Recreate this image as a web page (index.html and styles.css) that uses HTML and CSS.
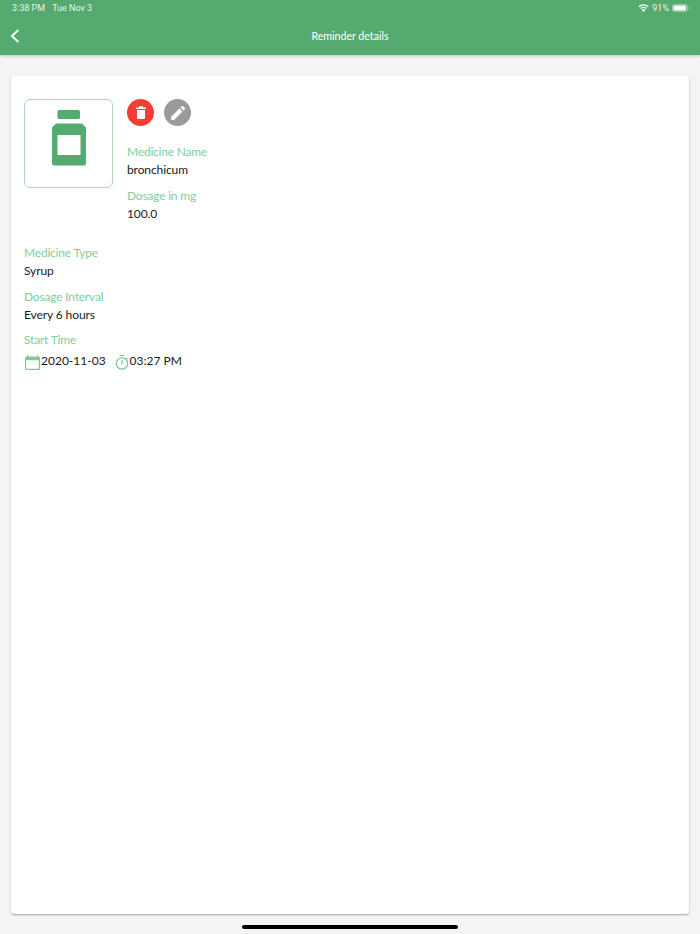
FILE: index.html
```html
<!DOCTYPE html>
<html lang="en">
<head>
<meta charset="utf-8">
<title>Reminder details</title>
<link rel="stylesheet" href="styles.css">
</head>
<body>
<header class="appbar">
  <div class="status">
    <div class="status-left"><span>3:38 PM</span><span>Tue Nov 3</span></div>
    <div class="status-right">
      <svg class="wifi" width="11" height="8" viewBox="0 0 11 8"><path d="M5.5 8 3.7 5.9a2.7 2.7 0 0 1 3.6 0z" fill="#fff"/><path d="M2.6 4.6a4.4 4.4 0 0 1 5.8 0M.8 2.700a7 7 0 0 1 9.400 0" fill="none" stroke="#fff" stroke-width="1.300"/></svg>
      <span>91%</span>
      <svg class="battery" width="18" height="8" viewBox="0 0 18 8"><rect x=".5" y=".5" width="15" height="7" rx="2" fill="none" stroke="#fff" stroke-opacity=".45"/><rect x="1.500" y="1.500" width="12.500" height="5" rx="1" fill="#fff"/><path d="M16.500 2.700c.7.2 1 .7 1 1.300s-.3 1.100-1 1.300z" fill="#fff" fill-opacity=".5"/></svg>
    </div>
  </div>
  <div class="nav">
    <svg class="back" width="10" height="14" viewBox="0 0 10 14"><path d="M8.300 1 2 7l6.300 6" fill="none" stroke="#fff" stroke-width="2"/></svg>
    <h1 class="title">Reminder details</h1>
  </div>
</header>
<main class="card">
  <section class="top">
    <div class="picture">
      <svg width="34" height="56" viewBox="0 0 34 56"><rect x="5.500" y="0" width="22.500" height="9" rx="1.500" fill="#55ab6f"/><path d="M4 13.500h26l4 4V53.500a2 2 0 0 1-2 2H2a2 2 0 0 1-2-2V17.500z" fill="#55ab6f"/><rect x="5.500" y="25" width="23" height="20" fill="#fff"/></svg>
    </div>
    <div class="top-info">
      <div class="actions">
        <button class="round delete" type="button" aria-label="Delete">
          <svg width="10" height="13" viewBox="0 0 10 13"><path d="M0 1.600h10V3H0zM3 .3h4v1.300H3zM1 4h8v8a1 1 0 0 1-1 1H2a1 1 0 0 1-1-1z" fill="#fff"/></svg>
        </button>
        <button class="round edit" type="button" aria-label="Edit">
          <svg width="14" height="14" viewBox="0 0 14 14"><path d="M0 14v-3L8.500 2.500l3 3L3 14zM9.500 1.500 10.800.2a.8.8 0 0 1 1.100 0l1.900 1.900a.8.8 0 0 1 0 1.100l-1.300 1.300z" fill="#fff"/></svg>
        </button>
      </div>
      <div class="field first"><div class="label">Medicine Name</div><div class="value">bronchicum</div></div>
      <div class="field"><div class="label">Dosage in mg</div><div class="value">100.0</div></div>
    </div>
  </section>
  <section class="details">
    <div class="field"><div class="label">Medicine Type</div><div class="value">Syrup</div></div>
    <div class="field"><div class="label">Dosage Interval</div><div class="value">Every 6 hours</div></div>
    <div class="field">
      <div class="label">Start Time</div>
      <div class="value when">
        <svg class="cal" width="15" height="15" viewBox="0 0 15 15"><path d="M3 0v1.500h9V0h1v1.500h.5A1.500 1.500 0 0 1 15 3v10.500a1.500 1.500 0 0 1-1.500 1.500h-12A1.500 1.500 0 0 1 0 13.500V3a1.500 1.500 0 0 1 1.500-1.500H2V0z M1.200 5.200v8.600h12.600V5.200z" fill="#7fcb95" fill-rule="evenodd"/></svg>
        <span>2020-11-03</span>
        <svg class="timer" width="14" height="15" viewBox="0 0 14 15"><path d="M4.500.5h5" stroke="#7fcb95" stroke-width="1.200"/><circle cx="7" cy="8.500" r="5.700" fill="none" stroke="#7fcb95" stroke-width="1.300"/><path d="M7 5v4" stroke="#7fcb95" stroke-width="1.300"/><path d="m11 3 1.300 1.300" stroke="#7fcb95" stroke-width="1.200"/></svg>
        <span>03:27 PM</span>
      </div>
    </div>
  </section>
</main>
<div class="home-wrap"><div class="home"></div></div>
</body>
</html>
```
FILE: styles.css
```css
* { box-sizing: border-box; }
html, body { height: 100%; }
body {
  margin: 0;
  height: 934px;
  overflow: hidden;
  background: #f4f4f4;
  font-family: Lato, "Open Sans", sans-serif;
  color: #1a1a1a;
  display: flex;
  flex-direction: column;
}
.appbar {
  height: 55px;
  background: #55ab6f;
  color: #fff;
  box-shadow: 0 1px 3px rgba(0,0,0,.22);
  flex: none;
}
.status {
  height: 16px;
  padding: 0 10px 0 12px;
  display: flex;
  justify-content: space-between;
  align-items: center;
  font-family: Roboto, sans-serif;
  font-size: 9px;
  color: rgba(255,255,255,.88);
}
.status-left { display: flex; gap: 7px; }
.status-right { display: flex; align-items: center; gap: 3px; }
.nav {
  height: 39px;
  display: flex;
  align-items: center;
  justify-content: center;
  position: relative;
}
.back { position: absolute; left: 10px; top: 13px; }
.title {
  margin: 0;
  font-size: 10.600px;
  font-weight: 400;
  color: #fff;
}
.card {
  flex: none;
  height: 838px;
  margin: 21px 11px 0;
  padding: 23px 13px;
  background: #fff;
  border-radius: 3px;
  box-shadow: 0 1px 2px rgba(0,0,0,.35);
}
.top { display: flex; gap: 14px; }
.picture {
  width: 89px;
  height: 89px;
  border: 1px solid #a9dbb8;
  border-radius: 6px;
  display: flex;
  justify-content: center;
  padding-top: 10px;
}
.top-info { display: flex; flex-direction: column; }
.actions { display: flex; gap: 10px; }
.round {
  width: 27px;
  height: 27px;
  border: 0;
  padding: 0;
  border-radius: 50%;
  display: flex;
  align-items: center;
  justify-content: center;
}
.delete { background: #f73c33; }
.edit { background: #9a9a9a; }
.field { margin-top: 8px; }
.field.first { margin-top: 17px; }
.label {
  font-size: 12px;
  letter-spacing: -.2px;
  line-height: 18px;
  color: #82cc99;
}
.value {
  font-size: 12px;
  letter-spacing: -.1px;
  line-height: 18px;
}
.details { margin-top: 21px; }
.details .field { margin-top: 0; margin-bottom: 7.500px; }
.when { display: flex; align-items: center; margin-top: 3px; letter-spacing: 0; }
.cal { margin: 2px 1px 0 1px; }
.timer { margin: 2px 1px 0 9px; }
.home-wrap {
  flex: 1;
  display: flex;
  justify-content: center;
  padding-top: 11px;
}
.home {
  width: 216px;
  height: 4px;
  border-radius: 2px;
  background: #000;
}
```
